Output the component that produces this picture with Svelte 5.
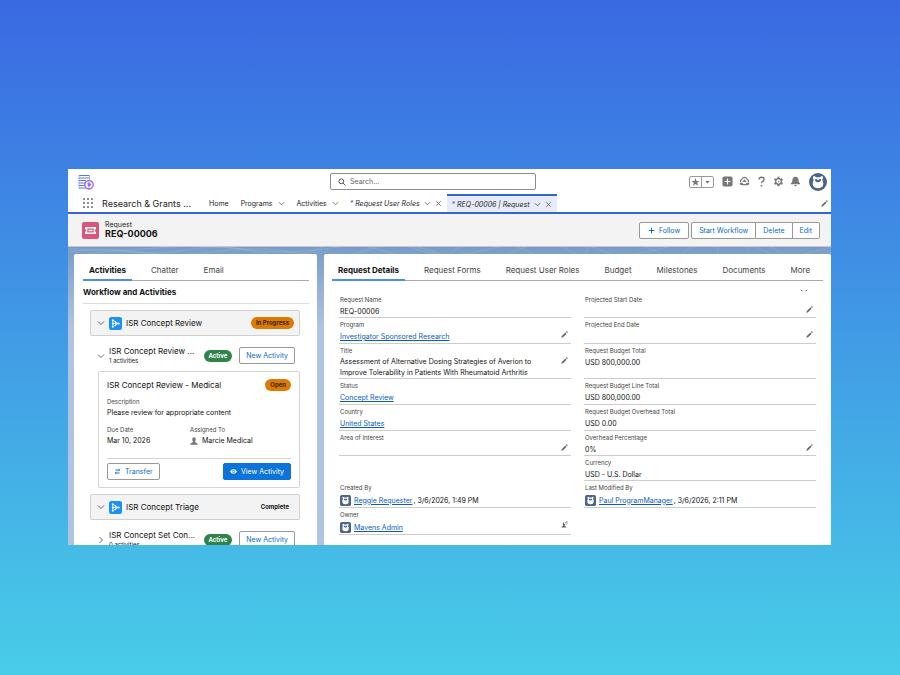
<script>
	let navItems = [
		{ label: 'Home' },
		{ label: 'Programs', menu: true },
		{ label: 'Activities', menu: true },
		{ label: 'Request User Roles', menu: true, close: true },
		{ label: 'REQ-00006 | Request', menu: true, close: true, active: true }
	];

	let sideTabs = ['Activities', 'Chatter', 'Email'];
	let sideTab = $state('Activities');

	let mainTabs = [
		'Request Details',
		'Request Forms',
		'Request User Roles',
		'Budget',
		'Milestones',
		'Documents',
		'More'
	];
	let mainTab = $state('Request Details');

	let search = $state('');

	// left and right field of every row
	let rows = [
		[
			{ label: 'Request Name', value: 'REQ-00006' },
			{ label: 'Projected Start Date', edit: true }
		],
		[
			{ label: 'Program', link: 'Investigator Sponsored Research', edit: true },
			{ label: 'Projected End Date', edit: true }
		],
		[
			{
				label: 'Title',
				value:
					'Assessment of Alternative Dosing Strategies of Averion to Improve Tolerability in Patients With Rheumatoid Arthritis',
				edit: true,
				long: true
			},
			{ label: 'Request Budget Total', value: 'USD 800,000.00' }
		],
		[
			{ label: 'Status', link: 'Concept Review' },
			{ label: 'Request Budget Line Total', value: 'USD 800,000.00' }
		],
		[
			{ label: 'Country', link: 'United States' },
			{ label: 'Request Budget Overhead Total', value: 'USD 0.00' }
		],
		[
			{ label: 'Area of Interest', edit: true },
			{ label: 'Overhead Percentage', value: '0%', edit: true }
		],
		[null, { label: 'Currency', value: 'USD - U.S. Dollar' }],
		[
			{ label: 'Created By', link: 'Reggie Requester', date: '3/6/2026, 1:49 PM', user: true },
			{ label: 'Last Modified By', link: 'Paul ProgramManager', date: '3/6/2026, 2:11 PM', user: true }
		],
		[{ label: 'Owner', link: 'Mavens Admin', user: true, owner: true }, null]
	];
</script>

{#snippet chevron()}
	<svg class="chev" viewBox="0 0 8 8"><path d="M1 2.5 4 5.5 7 2.5" /></svg>
{/snippet}

{#snippet pencil()}
	<svg class="pencil" viewBox="0 0 8 8">
		<path d="M.3 7.700 1 5.700 5 1.700 6.300 3 2.300 7zM5.600 1.100 6.300.4q.2-.2.5 0l.8.8q.2.3 0 .5l-.7.7z" />
	</svg>
{/snippet}

{#snippet astro()}
	<path
		fill="#fff"
		d="M4 5Q3.600 3 5.300 3L7.200 4.200h3.600L12.700 3Q14.400 3 14 5L13.300 6.700Q14.700 9.500 14 12.500 12.500 15.300 9 15.300T4 12.500Q3.300 9.500 4.700 6.700z"
	/>
	<path fill="#4d6489" d="M6 6.300q1.300-.6 3-.6t3 .6q.2 3-3 3t-3-3z" />
	<path fill="#fff" d="M7.400 5.700h3.200L9 7.500z" />
{/snippet}

{#snippet flow()}
	<svg class="flow" viewBox="0 0 12 12">
		<rect width="12" height="12" rx="2" fill="#1b90f5" />
		<path d="M3.500 3v6M3.500 3 8.500 6 3.500 9M3.500 6h5" fill="none" stroke="#fff" stroke-width=".7" />
		<circle cx="3.500" cy="3" r=".9" fill="#fff" />
		<circle cx="3.500" cy="6" r=".9" fill="#fff" />
		<circle cx="3.500" cy="9" r=".9" fill="#fff" />
		<circle cx="6" cy="4.500" r=".7" fill="#fff" />
		<circle cx="6" cy="7.500" r=".7" fill="#fff" />
		<circle cx="9" cy="6" r=".9" fill="#fff" />
	</svg>
{/snippet}

{#snippet field(f)}
	{#if f}
		<div class="field" class:linked={f.link} class:user={f.user}>
			<dt>{f.label}</dt>
			<dd class:long={f.long}>
				{#if f.user}
					<svg class="mini" viewBox="0 0 18 18">
						<rect width="18" height="18" rx="3" fill="#4d6489" />
						{@render astro()}
					</svg>
				{/if}
				{#if f.link}<a href="#record">{f.link}</a>{/if}
				{#if f.date}<span class="date">, {f.date}</span>{/if}
				{#if f.value}<span>{f.value}</span>{/if}
			</dd>
			{#if f.edit}
				<button class="edit" aria-label="Edit {f.label}">{@render pencil()}</button>
			{/if}
			{#if f.owner}
				<button class="edit" aria-label="Change Owner">
					<svg class="pencil" viewBox="0 0 8 8">
						<path d="M.5 7.500q0-1.500 2-2V5Q1.700 4 2 2.700 2.500 1.500 3.600 1.800L3.400 3.500H5Q5 4.600 4.200 5.200v.4q1.800.4 2 1.900z" />
						<path d="M4.300 2.500Q4.600 1 7 1M6 .1 7.200 1 6 2M7 2.500Q7 3.800 5.700 4" fill="none" stroke="#666" stroke-width=".7" />
					</svg>
				</button>
			{/if}
		</div>
	{:else}
		<div></div>
	{/if}
{/snippet}

<div class="page">
	<div class="window">
		<header class="top">
			<svg class="logo" viewBox="0 0 16 16" fill="none">
				<path d="M1 1.500h10M1 4h10M1 6.500h7M1 9h6M1 11.500h6M1 14h7" stroke="#5b78e6" stroke-width="1" />
				<path d="M1 1v13.500M11.500 1v5" stroke="#8f9df0" stroke-width=".8" />
				<circle cx="11" cy="10.800" r="4.200" fill="#f5edff" stroke="#9a63db" stroke-width="1.300" />
				<path d="M11 8.300v5M12.200 9.400q-2.400-.8-2.400.4t2.400 1-2.400.9" stroke="#6a5ae0" stroke-width=".8" />
			</svg>
			<label class="search">
				<svg viewBox="0 0 8 8"><circle cx="3.300" cy="3.300" r="2.400" /><path d="M5.100 5.100 7.500 7.500" /></svg>
				<input type="search" placeholder="Search..." aria-label="Search" bind:value={search} />
			</label>
			<div class="tools">
				<div class="fav">
					<button aria-label="Favorites">
						<svg viewBox="0 0 10 10"><path d="M5 .6 6.200 3.800 9.500 3.900 6.900 5.900 7.800 9.200 5 7.300 2.200 9.200 3.100 5.900.5 3.900 3.800 3.800z" /></svg>
					</button>
					<button aria-label="Favorites list">
						<svg viewBox="0 0 10 10"><path d="M2.500 4h5L5 6.700z" /></svg>
					</button>
				</div>
				<button aria-label="Global actions">
					<svg viewBox="0 0 12 12">
						<rect x=".5" y=".5" width="11" height="11" rx="2" />
						<path d="M6 2.800v6.400M2.800 6h6.400" stroke="#fff" stroke-width="1.300" />
					</svg>
				</button>
				<button aria-label="Guidance">
					<svg viewBox="0 0 12 12">
						<path d="M1.600 6.600Q1.200 4.300 3 3.700 3.700 1.400 6 1.400t3 2.300q1.800.6 1.400 2.900" fill="none" stroke="#777" stroke-width="1.300" />
						<path d="M.6 7.400h3.200l.8 1.300h2.800l.8-1.300h3.200q-.2 2.800-2.700 2.800H3.300Q.8 10.200.6 7.400z" />
						<path d="M6 3.500 8.300 6.500H3.700z" />
					</svg>
				</button>
				<button aria-label="Help">
					<svg viewBox="0 0 12 12">
						<path d="M3.200 3.800q0-2.500 2.800-2.500t2.800 2.400q0 1.300-1.400 2.100T6 8" fill="none" stroke="#777" stroke-width="1.500" />
						<circle cx="6" cy="10.500" r="1" />
					</svg>
				</button>
				<button aria-label="Setup">
					<svg viewBox="0 0 12 12">
						<path
							fill-rule="evenodd"
							d="M5 .8h2l.3 1.500 1.100.6 1.500-.5 1 1.700-1.200 1.200v1.400l1.200 1.200-1 1.700-1.500-.5-1.100.6L7 11.200H5l-.3-1.500-1.100-.6-1.500.5-1-1.700 1.200-1.200V5.300L1.100 4.100l1-1.700 1.500.5 1.100-.6zM6 3.600a2.400 2.400 0 1 0 .01 0z"
						/>
						<path d="M6.400 4.300 5 6.300h1L5.600 7.800 7.100 5.700H6z" />
					</svg>
				</button>
				<button aria-label="Notifications">
					<svg viewBox="0 0 12 12">
						<path d="M6 .8q3.300.2 3.400 3.700 0 2.500 1.600 3.500v.9H1V8q1.600-1 1.600-3.500Q2.700 1 6 .8zM4.500 9.700h3Q7.200 11.200 6 11.200T4.500 9.700z" />
					</svg>
				</button>
				<button class="avatar" aria-label="View profile">
					<svg viewBox="0 0 18 18">
						<circle cx="9" cy="9" r="9" fill="#4d6489" />
						{@render astro()}
					</svg>
				</button>
			</div>
		</header>

		<nav>
			<button class="waffle" aria-label="App Launcher">
				{#each Array(9) as _}<i></i>{/each}
			</button>
			<span class="app">Research &amp; Grants ...</span>
			{#each navItems as item}
				<div class="item" class:temp={item.close} class:active={item.active}>
					<a href="#nav">{#if item.close}<b>*&nbsp;</b>{/if}{item.label}</a>
					{#if item.menu}
						<button aria-label="{item.label} list">{@render chevron()}</button>
					{/if}
					{#if item.close}
						<button aria-label="Close {item.label}">
							<svg class="chev" viewBox="0 0 8 8"><path d="M1.500 1.500 6.500 6.500M6.500 1.500 1.500 6.500" /></svg>
						</button>
					{/if}
				</div>
			{/each}
			<button class="nav-edit" aria-label="Edit navigation">{@render pencil()}</button>
		</nav>

		<section class="record">
			<svg class="ticket" viewBox="0 0 17 17">
				<rect width="17" height="17" rx="2" fill="#d9557b" />
				<path
					fill="#fff"
					fill-rule="evenodd"
					d="M3 5h11v2.200a1.300 1.300 0 0 0 0 2.600V12H3V9.800a1.300 1.300 0 0 0 0-2.600zM5.300 6.500v4h6.400v-4zM6.500 7.700h4v1.600h-4z"
				/>
			</svg>
			<div>
				<p>Request</p>
				<h1>REQ-00006</h1>
			</div>
			<div class="actions">
				<button class="btn">
					<svg viewBox="0 0 8 8"><path d="M4 .8v6.400M.8 4h6.400" fill="none" stroke="#0b6bc9" stroke-width="1.100" /></svg>
					Follow
				</button>
				<div class="group">
					<button class="btn">Start Workflow</button>
					<button class="btn">Delete</button>
					<button class="btn">Edit</button>
				</div>
			</div>
		</section>

		<main>
			<svg class="waves" viewBox="0 0 763 8" preserveAspectRatio="none">
				<path d="M0 6Q30 0 60 5T120 3T190 6T250 2T320 6T390 1T460 5T520 2T590 6T650 1T710 5T763 3" />
				<path d="M20 8Q50 2 80 7T150 5T230 7T300 3T370 7T450 3T540 7T620 3T700 7T763 5" />
				<path d="M0 2Q40 6 90 1T180 3T270 0T350 3T430 0T500 3T600 0T680 3T763 0" />
			</svg>

			<aside class="panel">
				<div class="tabs" role="tablist">
					{#each sideTabs as tab}
						<button role="tab" aria-selected={sideTab === tab} class:on={sideTab === tab} onclick={() => (sideTab = tab)}>{tab}</button>
					{/each}
				</div>
				<h2>Workflow and Activities</h2>

				<div class="stages">
					<div class="stage">
						<button class="toggle" aria-label="Toggle ISR Concept Review">{@render chevron()}</button>
						{@render flow()}
						<h3>ISR Concept Review</h3>
						<span class="badge orange">In Progress</span>
					</div>

					<div class="step">
						<button class="toggle" aria-label="Toggle activities">{@render chevron()}</button>
						<div class="name">
							<h3>ISR Concept Review ...</h3>
							<p>1 activities</p>
						</div>
						<span class="badge green">Active</span>
						<button class="btn">New Activity</button>
					</div>

					<article>
						<div class="title">
							<h3>ISR Concept Review - Medical</h3>
							<span class="badge orange">Open</span>
						</div>
						<dl class="facts">
							<div class="wide">
								<dt>Description</dt>
								<dd>Please review for appropriate content</dd>
							</div>
							<div>
								<dt>Due Date</dt>
								<dd>Mar 10, 2026</dd>
							</div>
							<div>
								<dt>Assigned To</dt>
								<dd>
									<svg viewBox="0 0 8 8"><path d="M4 .3Q5.900.4 5.800 2.400 5.700 4 4.900 4.600q0 .5 1 .8Q7.800 6 7.800 7.700H.2Q.2 6 2.100 5.400q1-.3 1-.8Q2.300 4 2.200 2.400 2.100.4 4 .3z" fill="#777" /></svg>
									Marcie Medical
								</dd>
							</div>
						</dl>
						<div class="foot">
							<button class="btn">
								<svg viewBox="0 0 8 8"><path d="M1.500 2.300h5M5 .8 6.500 2.300 5 3.800M6.500 5.700h-5M3 4.200 1.500 5.700 3 7.200" fill="none" stroke="#0b6bc9" /></svg>
								Transfer
							</button>
							<button class="btn brand">
								<svg viewBox="0 0 8 8">
									<path fill="#fff" d="M0 4Q1.500 1.300 4 1.300T8 4Q6.500 6.700 4 6.700T0 4z" />
									<circle cx="4" cy="4" r="1.400" fill="#fff" stroke="#0b74d6" stroke-width=".8" />
								</svg>
								View Activity
							</button>
						</div>
					</article>

					<div class="stage">
						<button class="toggle" aria-label="Toggle ISR Concept Triage">{@render chevron()}</button>
						{@render flow()}
						<h3>ISR Concept Triage</h3>
						<span class="badge">Complete</span>
					</div>

					<div class="step">
						<button class="toggle closed" aria-label="Toggle activities">{@render chevron()}</button>
						<div class="name">
							<h3>ISR Concept Set Con...</h3>
							<p>0 activities</p>
						</div>
						<span class="badge green">Active</span>
						<button class="btn">New Activity</button>
					</div>
				</div>
			</aside>

			<section class="panel details">
				<div class="tabs" role="tablist">
					{#each mainTabs as tab}
						<button role="tab" aria-selected={mainTab === tab} class:on={mainTab === tab} onclick={() => (mainTab = tab)}>{tab}</button>
					{/each}
				</div>
				<div class="more">
					<svg viewBox="0 0 8 4"><path d="M1 .8 2.500 2.300M7 .8 5.500 2.300" fill="none" stroke="#444" /></svg>
				</div>
				<dl class="fields">
					{#each rows as [left, right]}
						{@render field(left)}
						{@render field(right)}
					{/each}
				</dl>
			</section>
		</main>
	</div>
</div>

<style>
	:global(body) {
		margin: 0;
		font-family: Inter, 'Liberation Sans', sans-serif;
	}

	.page {
		box-sizing: border-box;
		height: 100vh;
		padding: 169px 69px 130px 68px;
		display: flex;
		background: linear-gradient(180deg, #3a69e2 0%, #48cde8 100%);
		color: #222;
		font-size: 7px;
		line-height: 11px;
	}

	.window {
		flex: 1;
		min-width: 0;
		display: flex;
		flex-direction: column;
		overflow: hidden;
		background: white;
	}

	button {
		font: inherit;
		color: inherit;
		background: none;
		border: none;
		padding: 0;
		margin: 0;
		cursor: pointer;
	}

	button svg {
		display: block;
	}

	h1,
	h2,
	h3,
	p,
	dl,
	dt,
	dd {
		margin: 0;
		font-weight: 400;
	}

	a {
		color: inherit;
		text-decoration: none;
	}

	.chev {
		width: 8px;
		height: 8px;
		fill: none;
		stroke: #555;
		stroke-width: 0.9;
	}

	.pencil {
		width: 7px;
		height: 7px;
		fill: #666;
	}

	/* Top bar */
	.top {
		display: grid;
		grid-template-columns: 252px 206px 1fr;
		align-items: center;
		height: 25px;
		flex: none;
		padding: 0 4px 0 10px;
	}

	.logo {
		width: 16px;
		height: 16px;
	}

	.search {
		display: flex;
		align-items: center;
		gap: 4px;
		box-sizing: border-box;
		height: 17px;
		padding: 0 7px;
		border: 1px solid #8c8c8c;
		border-radius: 2px;
	}

	.search svg {
		width: 8px;
		height: 8px;
		fill: none;
		stroke: #555;
	}

	.search input {
		flex: 1;
		min-width: 0;
		font: inherit;
		border: none;
		outline: none;
		padding: 0;
		background: none;
	}

	.search input::placeholder {
		color: #666;
	}

	.tools {
		display: flex;
		align-items: center;
		justify-content: flex-end;
		gap: 6px;
	}

	.tools svg {
		width: 11px;
		height: 11px;
		fill: #777;
	}

	.fav {
		display: flex;
		margin-right: 2px;
		border: 1px solid #999;
		border-radius: 2px;
	}

	.fav svg {
		width: 9px;
		height: 10px;
		padding: 0 1px;
	}

	.fav button + button {
		border-left: 1px solid #999;
	}

	.tools .avatar {
		margin-left: 2px;
	}

	.tools .avatar svg {
		width: 18px;
		height: 18px;
	}

	/* Navigation */
	nav {
		display: flex;
		align-items: stretch;
		height: 18px;
		flex: none;
		padding: 0 3px 0 15px;
		border-bottom: 2px solid #3563d0;
	}

	.waffle {
		display: grid;
		grid-template-columns: repeat(3, 3px);
		gap: 1px;
		align-content: center;
	}

	.waffle i {
		width: 2px;
		height: 2px;
		margin-bottom: 1px;
		border-radius: 50%;
		background: #666;
	}

	.app {
		margin: 0 12px 0 8px;
		font-size: 9px;
		line-height: 19px;
	}

	.item {
		display: flex;
		align-items: center;
		gap: 5px;
		padding: 1px 6px 0;
	}

	.item .chev {
		width: 7px;
		height: 7px;
	}

	.temp {
		gap: 4px;
		font-style: italic;
		padding: 1px 5px 0;
	}

	.temp b {
		color: #3563d0;
		font-weight: 400;
	}

	.active {
		background: #e7ecfa;
		border-top: 2px solid #3563d0;
		padding-top: 0;
	}

	.nav-edit {
		margin-left: auto;
	}

	/* Record header */
	.record {
		display: flex;
		align-items: center;
		gap: 6px;
		height: 32px;
		flex: none;
		padding: 0 11px 0 14px;
		background: #f3f3f3;
		border-bottom: 1px solid #c9c9c9;
	}

	.ticket {
		width: 17px;
		height: 17px;
	}

	.record p {
		line-height: 8px;
	}

	.record h1 {
		font-size: 9px;
		line-height: 10px;
		font-weight: 700;
		color: #111;
	}

	.actions {
		display: flex;
		gap: 2px;
		margin-left: auto;
	}

	.btn {
		box-sizing: border-box;
		height: 17px;
		display: flex;
		align-items: center;
		justify-content: center;
		gap: 4px;
		padding: 0 8px;
		border: 1px solid #999;
		border-radius: 2px;
		background: white;
		color: #0b6bc9;
		white-space: nowrap;
	}

	.btn svg {
		width: 7px;
		height: 7px;
	}

	.group {
		display: flex;
	}

	.group .btn {
		padding: 0 7px;
	}

	.group .btn + .btn {
		border-left: none;
		border-radius: 0 2px 2px 0;
	}

	.group .btn:not(:last-child) {
		border-top-right-radius: 0;
		border-bottom-right-radius: 0;
	}

	/* Body */
	main {
		position: relative;
		flex: 1;
		min-height: 0;
		display: flex;
		align-items: stretch;
		gap: 7px;
		padding: 7px 0 0 6px;
		background: linear-gradient(180deg, #789cc9 0, #b0c3e0 80px);
	}

	.waves {
		position: absolute;
		left: 0;
		top: 0;
		width: 100%;
		height: 7px;
		fill: none;
		stroke: rgba(255, 255, 255, 0.12);
	}

	.panel {
		position: relative;
		box-sizing: border-box;
		width: 243px;
		flex: none;
		padding: 8px 8px 0 9px;
		background: white;
		border-radius: 2px 2px 0 0;
	}

	.details {
		width: auto;
		flex: 1;
		padding: 8px 8px 0;
	}

	.tabs {
		display: flex;
		gap: 13px;
		border-bottom: 1px solid #aaa;
	}

	.tabs button {
		padding: 0 6px;
		font-size: 8px;
		line-height: 17px;
		color: #444;
		border-bottom: 2px solid transparent;
		margin-bottom: -1px;
	}

	.tabs button.on {
		font-weight: 700;
		color: #111;
		border-color: #4a90dd;
	}

	h2 {
		font-size: 8px;
		line-height: 22px;
		font-weight: 700;
		color: #111;
		border-bottom: 1px solid #ddd;
	}

	h3 {
		font-size: 8px;
		line-height: 11px;
		color: #111;
		white-space: nowrap;
	}

	.stages {
		padding: 6px 9px 0 7px;
	}

	.stage {
		box-sizing: border-box;
		display: flex;
		align-items: center;
		gap: 4px;
		height: 26px;
		padding: 0 5px 0 6px;
		background: #f3f3f3;
		border: 1px solid #d0d0d0;
		border-radius: 2px;
	}

	.flow {
		width: 13px;
		height: 13px;
	}

	.badge {
		margin-left: auto;
		padding: 0 5px;
		border-radius: 6px;
		font-weight: 700;
		font-size: 6px;
		line-height: 12px;
		color: #111;
	}

	.orange {
		background: #dd7a01;
		color: #3b1f00;
	}

	.green {
		background: #2e844a;
		color: white;
	}

	.step {
		box-sizing: border-box;
		display: flex;
		align-items: center;
		gap: 7px;
		height: 35px;
		padding: 4px 5px 0 7px;
	}

	.step .name {
		margin-left: -3px;
	}

	.step .name p {
		font-size: 6px;
		line-height: 8px;
	}

	.step .btn,
	.foot .btn {
		padding: 0 6px;
	}

	.toggle.closed {
		transform: rotate(-90deg);
	}

	article {
		margin: 0 0 6px 8px;
		padding: 7px 8px;
		border: 1px solid #d4d4d4;
		border-radius: 2px;
	}

	.title {
		display: flex;
		align-items: center;
	}

	.facts {
		display: grid;
		grid-template-columns: 83px 1fr;
		row-gap: 7px;
		padding: 6px 0 12px;
	}

	.wide {
		grid-column: 1 / -1;
	}

	dt {
		font-size: 6px;
		line-height: 10px;
		color: #444;
	}

	dd {
		display: flex;
		align-items: center;
		color: #111;
	}

	.facts dd svg {
		width: 8px;
		height: 8px;
		margin-right: 4px;
	}

	.foot {
		display: flex;
		justify-content: space-between;
		padding-top: 4px;
		border-top: 1px solid #d4d4d4;
	}

	.brand {
		background: #0b74d6;
		border-color: #0b74d6;
		color: white;
	}

	/* Detail fields */
	.more {
		display: flex;
		justify-content: flex-end;
		height: 12px;
		padding: 0 15px 0 0;
		align-items: flex-end;
	}

	.more svg {
		width: 8px;
		height: 4px;
	}

	.fields {
		display: grid;
		grid-template-columns: 1fr 1fr;
		column-gap: 13px;
		padding: 0 7px;
	}

	.field {
		position: relative;
		box-sizing: border-box;
		min-height: 25px;
		padding: 2px 1px 0;
		border-bottom: 1px solid #ccc;
	}

	.field dd {
		min-height: 12px;
	}

	.field.linked dd {
		min-height: 13px;
	}

	.field.user dd {
		min-height: 14px;
	}

	.field .long {
		padding-right: 36px;
	}

	.field a {
		color: #0b5cbd;
		text-decoration: underline;
	}

	.field .date {
		margin-left: 1px;
	}

	.mini {
		width: 11px;
		height: 11px;
		margin-right: 3px;
	}

	.edit {
		position: absolute;
		right: 3px;
		top: 13px;
	}
</style>
